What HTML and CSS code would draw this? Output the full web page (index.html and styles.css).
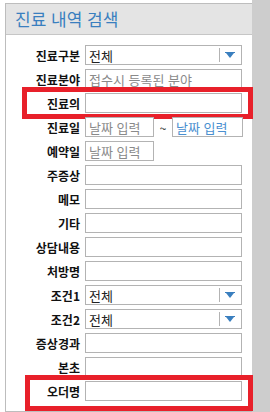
FILE: index.html
```html
<!DOCTYPE html>
<html lang="ko">
<head>
    <meta charset="UTF-8">
    <meta name="viewport" content="width=device-width, initial-scale=1.0">
    <title>진료 내역 검색</title>
    <link rel="stylesheet" href="styles.css">
</head>
<body>
    <div class="page">
        <div class="panel">
            <div class="panel-head">진료 내역 검색</div>
            <div class="form">
                <div class="row">
                    <span class="label">진료구분</span>
                    <div class="field select">
                        <span class="value">전체</span>
                        <span class="arrow"></span>
                    </div>
                </div>
                <div class="row">
                    <span class="label">진료분야</span>
                    <div class="field"><span class="hint">접수시 등록된 분야</span></div>
                </div>
                <div class="row">
                    <span class="label">진료의</span>
                    <div class="field"></div>
                    <span class="mark mark-doctor"></span>
                </div>
                <div class="row">
                    <span class="label">진료일</span>
                    <div class="field date"><span class="hint">날짜 입력</span></div>
                    <span class="tilde">~</span>
                    <div class="field date date-to"><span class="hint blue">날짜 입력</span></div>
                </div>
                <div class="row">
                    <span class="label">예약일</span>
                    <div class="field date"><span class="hint">날짜 입력</span></div>
                </div>
                <div class="row">
                    <span class="label">주증상</span>
                    <div class="field"></div>
                </div>
                <div class="row">
                    <span class="label">메모</span>
                    <div class="field"></div>
                </div>
                <div class="row">
                    <span class="label">기타</span>
                    <div class="field"></div>
                </div>
                <div class="row">
                    <span class="label">상담내용</span>
                    <div class="field"></div>
                </div>
                <div class="row">
                    <span class="label">처방명</span>
                    <div class="field"></div>
                </div>
                <div class="row">
                    <span class="label">조건1</span>
                    <div class="field select">
                        <span class="value">전체</span>
                        <span class="arrow"></span>
                    </div>
                </div>
                <div class="row">
                    <span class="label">조건2</span>
                    <div class="field select">
                        <span class="value">전체</span>
                        <span class="arrow"></span>
                    </div>
                </div>
                <div class="row">
                    <span class="label">증상경과</span>
                    <div class="field"></div>
                </div>
                <div class="row">
                    <span class="label">본초</span>
                    <div class="field"></div>
                </div>
                <div class="row">
                    <span class="label">오더명</span>
                    <div class="field"></div>
                    <span class="mark mark-order"></span>
                </div>
            </div>
        </div>
        <div class="side"></div>
    </div>
</body>
</html>
```

FILE: styles.css
```css
body {
    margin: 0;
    background-color: #fff;
    font-family: "Noto Sans CJK KR", "Noto Sans", sans-serif;
    font-size: 12px;
    color: #111;
}
.page {
    display: flex;
    height: 412px;
    overflow: hidden;
}
.panel {
    width: 247px;
    margin: 3px 0 0 5px;
    border-left: 1px solid #bdbdbd;
    border-top: 1px solid #bdbdbd;
    border-bottom: 1px solid #bdbdbd;
    box-sizing: border-box;
    height: 409px;
}
.side {
    flex: 1;
    background-color: #cdcdcd;
}
.panel-head {
    height: 30px;
    background-color: #e4e4e4;
    border-bottom: 1px solid #c6c6c6;
    color: #3a7fbf;
    font-size: 17px;
    line-height: 30px;
    padding-left: 9px;
}
.form {
    padding-top: 10px;
    display: flex;
    flex-direction: column;
    gap: 4px;
}
.row {
    position: relative;
    display: flex;
    align-items: center;
    height: 20px;
}
.label {
    width: 74px;
    margin-right: 5px;
    text-align: right;
    font-weight: bold;
    white-space: nowrap;
}
.field {
    position: relative;
    width: 157px;
    height: 20px;
    box-sizing: border-box;
    border: 1px solid #b3b3b3;
    background-color: #fff;
    display: flex;
    align-items: center;
    padding-left: 3px;
    font-size: 13px;
    white-space: nowrap;
    overflow: hidden;
}
.value {
    color: #222;
}
.hint {
    color: #8a8a8a;
}
.hint.blue {
    color: #4a8fd0;
}
.date {
    width: 69px;
}
.tilde {
    width: 18px;
    text-align: center;
    color: #222;
}
.date-to {
    width: 71px;
}
.select .arrow {
    position: absolute;
    right: 0;
    top: 2px;
    width: 21px;
    height: 14px;
    border-left: 1px solid #b3b3b3;
}
.select .arrow::after {
    content: "";
    position: absolute;
    left: 6px;
    top: 5px;
    border-left: 4px solid transparent;
    border-right: 4px solid transparent;
    border-top: 5px solid #3a7fbf;
}
.select .arrow::before {
    content: "";
    position: absolute;
    left: 5px;
    top: 4px;
    width: 10px;
    height: 1px;
    background-color: #3a7fbf;
}
.mark {
    position: absolute;
    top: -6px;
    height: 32px;
    border: 5px solid #e8202a;
    box-sizing: border-box;
}
.mark-doctor {
    left: 16px;
    width: 231px;
}
.mark-order {
    left: 19px;
    width: 228px;
    height: 36px;
}
```
